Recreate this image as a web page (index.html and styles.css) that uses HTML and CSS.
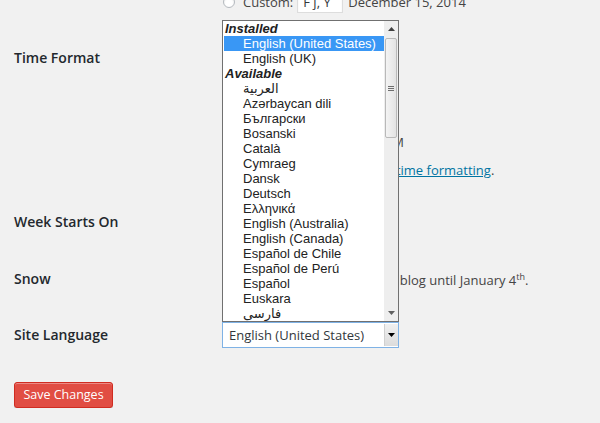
FILE: index.html
```html
<!DOCTYPE html>
<html lang="en">
<head>
<meta charset="utf-8">
<title>General Settings</title>
<link rel="stylesheet" href="styles.css">
</head>
<body>
<div class="page">
  <div class="row row-date">
    <div class="row-label"></div>
    <div class="row-field">
      <div class="choice">
        <span class="radio"></span><span class="choice-text">Custom:</span>
        <span class="input input-date">F j, Y</span>
        <span class="example">December 15, 2014</span>
      </div>
    </div>
  </div>

  <div class="row row-time">
    <div class="row-label">Time Format</div>
    <div class="row-field">
      <div class="choice"><span class="radio"></span><span class="choice-text">3:26 pm</span><code>g:i a</code></div>
      <div class="choice"><span class="radio"></span><span class="choice-text">3:26 PM</span><code>g:i A</code></div>
      <div class="choice"><span class="radio"></span><span class="choice-text">15:26</span><code>H:i</code></div>
      <div class="choice">
        <span class="radio checked"></span><span class="choice-text">Custom:</span>
        <span class="input input-time">g:i A</span>
        <span class="example example-time">3:26 PM</span>
      </div>
      <p class="doc"><a href="#">Documentation on date and time formatting</a>.</p>
    </div>
  </div>

  <div class="row row-week">
    <div class="row-label">Week Starts On</div>
    <div class="row-field">
      <div class="select select-week">Monday<span class="select-button"><svg width="7" height="4" viewBox="0 0 7 4"><polygon points="0,0 7,0 3.5,4" fill="#000"/></svg></span></div>
    </div>
  </div>

  <div class="row row-snow">
    <div class="row-label">Snow</div>
    <div class="row-field">
      <div class="check"><span class="checkbox"></span><span>Show falling snow on my blog until January 4<sup>th</sup>.</span></div>
    </div>
  </div>

  <div class="row row-lang">
    <div class="row-label">Site Language</div>
    <div class="row-field">
      <div class="select-wrap">
        <div class="listbox">
          <div class="options">
            <div class="opt group">Installed</div>
            <div class="opt selected">English (United States)</div>
            <div class="opt">English (UK)</div>
            <div class="opt group">Available</div>
            <div class="opt">العربية</div>
            <div class="opt">Azərbaycan dili</div>
            <div class="opt">Български</div>
            <div class="opt">Bosanski</div>
            <div class="opt">Català</div>
            <div class="opt">Cymraeg</div>
            <div class="opt">Dansk</div>
            <div class="opt">Deutsch</div>
            <div class="opt">Ελληνικά</div>
            <div class="opt">English (Australia)</div>
            <div class="opt">English (Canada)</div>
            <div class="opt">Español de Chile</div>
            <div class="opt">Español de Perú</div>
            <div class="opt">Español</div>
            <div class="opt">Euskara</div>
            <div class="opt">فارسی</div>
          </div>
          <div class="scrollbar">
            <div class="sb-btn"><svg width="7" height="4" viewBox="0 0 7 4"><polygon points="3.5,0 7,4 0,4" fill="#404040"/></svg></div>
            <div class="sb-track">
              <div class="sb-thumb"><span class="grip"></span><span class="grip"></span><span class="grip"></span></div>
            </div>
            <div class="sb-btn"><svg width="7" height="4" viewBox="0 0 7 4"><polygon points="0,0 7,0 3.5,4" fill="#606060"/></svg></div>
          </div>
        </div>
        <div class="select select-lang">English (United States)<span class="select-button"><svg width="7" height="4" viewBox="0 0 7 4"><polygon points="0,0 7,0 3.5,4" fill="#000"/></svg></span></div>
      </div>
    </div>
  </div>

  <div class="submit"><button class="button-primary" type="button">Save Changes</button></div>
</div>
</body>
</html>
```

FILE: styles.css
```css
html, body {
  margin: 0;
  padding: 0;
}

body {
  background: #f1f1f1;
  font-family: "Open Sans", "DejaVu Sans", sans-serif;
  font-size: 13px;
  color: #444;
  overflow: hidden;
}

.page {
  margin-top: -9px;
  padding: 0 14px;
}

.row {
  display: flex;
  align-items: flex-start;
}

.row-label {
  width: 208px;
  flex: none;
  font-size: 14px;
  font-weight: 600;
  line-height: 18px;
  color: #23282d;
}

.row-field {
  flex: 1;
  min-width: 0;
}

/* radio rows */
.choice {
  display: flex;
  align-items: center;
  height: 28px;
  white-space: nowrap;
}

.row-date .choice {
  height: 22px;
}

.radio {
  width: 12px;
  height: 12px;
  box-sizing: border-box;
  border: 1px solid #b4b9be;
  border-radius: 50%;
  background: #fff;
  box-shadow: inset 0 1px 2px rgba(0, 0, 0, 0.1);
  margin-left: 1px;
  flex: none;
}

.choice-text {
  margin-left: 8px;
}

.choice code {
  margin-left: 8px;
  padding: 2px 4px;
  background: rgba(0, 0, 0, 0.07);
  font-family: "Liberation Mono", monospace;
  font-size: 13px;
}

.input {
  box-sizing: border-box;
  height: 22px;
  margin-left: 4px;
  padding: 0 5px;
  border: 1px solid #ddd;
  background: #fff;
  box-shadow: inset 0 1px 2px rgba(0, 0, 0, 0.07);
  line-height: 20px;
  color: #32373c;
}

.input-date {
  width: 46px;
}

.input-time {
  width: 54px;
}

.example {
  margin-left: 5px;
}

.example-time {
  margin-left: 4px;
}

.row-time {
  padding-top: 31px;
}

.row-time .row-label {
  padding-top: 5px;
}

.doc {
  margin: 5px 0 0;
  line-height: 18px;
}

.doc a {
  color: #0074a2;
  text-decoration: underline;
}

/* selects */
.select {
  box-sizing: border-box;
  width: 177px;
  display: flex;
  align-items: center;
  padding-left: 6px;
  background: #fff;
  color: #32373c;
  white-space: nowrap;
}

.select-button {
  margin: 1px 0 1px auto;
  align-self: stretch;
  width: 14px;
  box-sizing: border-box;
  border-left: 1px solid #d0d0d0;
  background: linear-gradient(#f0f0f0, #dcdcdc);
  display: flex;
  align-items: center;
  justify-content: center;
}

.select-week {
  height: 28px;
  border: 1px solid #ddd;
}

.row-week {
  padding-top: 29px;
}

.row-week .row-label {
  padding-top: 5px;
}

/* snow */
.row-snow {
  padding-top: 30px;
}

.row-snow .row-label {
  padding-top: 4px;
}

.check {
  display: flex;
  align-items: center;
  height: 28px;
  white-space: nowrap;
}

.checkbox {
  width: 16px;
  height: 16px;
  box-sizing: border-box;
  border: 1px solid #b4b9be;
  background: #fff;
  margin-right: 9px;
  flex: none;
}

.check sup {
  font-size: 9px;
  line-height: 0;
}

/* language */
.row-lang {
  padding-top: 28px;
}

.row-lang .row-label {
  padding-top: 4px;
}

.select-wrap {
  position: relative;
  width: 177px;
}

.select-lang {
  height: 26px;
  border: 1px solid #7fb2e5;
  font-size: 13px;
}

.listbox {
  position: absolute;
  left: 0;
  bottom: 100%;
  width: 177px;
  height: 302px;
  box-sizing: border-box;
  border: 1px solid #707070;
  background: #fff;
  display: flex;
  font-family: "Liberation Sans", "DejaVu Sans", sans-serif;
  font-size: 13px;
  color: #222;
  z-index: 2;
}

.options {
  flex: 1;
  min-width: 0;
  padding-left: 1px;
  overflow: hidden;
}

.opt {
  height: 15px;
  line-height: 15px;
  padding-left: 19px;
  white-space: nowrap;
  overflow: hidden;
}

.opt.group {
  padding-left: 1px;
  font-weight: bold;
  font-style: italic;
}

.opt.selected {
  background: #3997f5;
  color: #fff;
}

.scrollbar {
  width: 14px;
  flex: none;
  background: #eeeeee;
  display: flex;
  flex-direction: column;
}

.sb-btn {
  height: 16px;
  flex: none;
  display: flex;
  align-items: center;
  justify-content: center;
}

.sb-track {
  flex: 1;
  padding-top: 1px;
}

.sb-thumb {
  box-sizing: border-box;
  width: 12px;
  height: 100px;
  margin: 0 1px;
  border: 1px solid #b9b9b9;
  border-radius: 2px;
  background: linear-gradient(to right, #f4f4f4, #e3e3e3);
  display: flex;
  flex-direction: column;
  align-items: center;
  justify-content: center;
  gap: 1px;
}

.grip {
  width: 6px;
  height: 1px;
  background: #6e6e6e;
}

/* submit */
.submit {
  padding-top: 34px;
}

.button-primary {
  box-sizing: border-box;
  height: 26px;
  width: 99px;
  padding: 0;
  border: 1px solid #d02c21;
  border-radius: 3px;
  background: #e14d43;
  color: #fff;
  font-family: "Open Sans", sans-serif;
  font-size: 12.5px;
  line-height: 24px;
  text-align: center;
  box-shadow: inset 0 1px 0 #ec8a85, 0 1px 0 rgba(0, 0, 0, 0.15);
}
```
